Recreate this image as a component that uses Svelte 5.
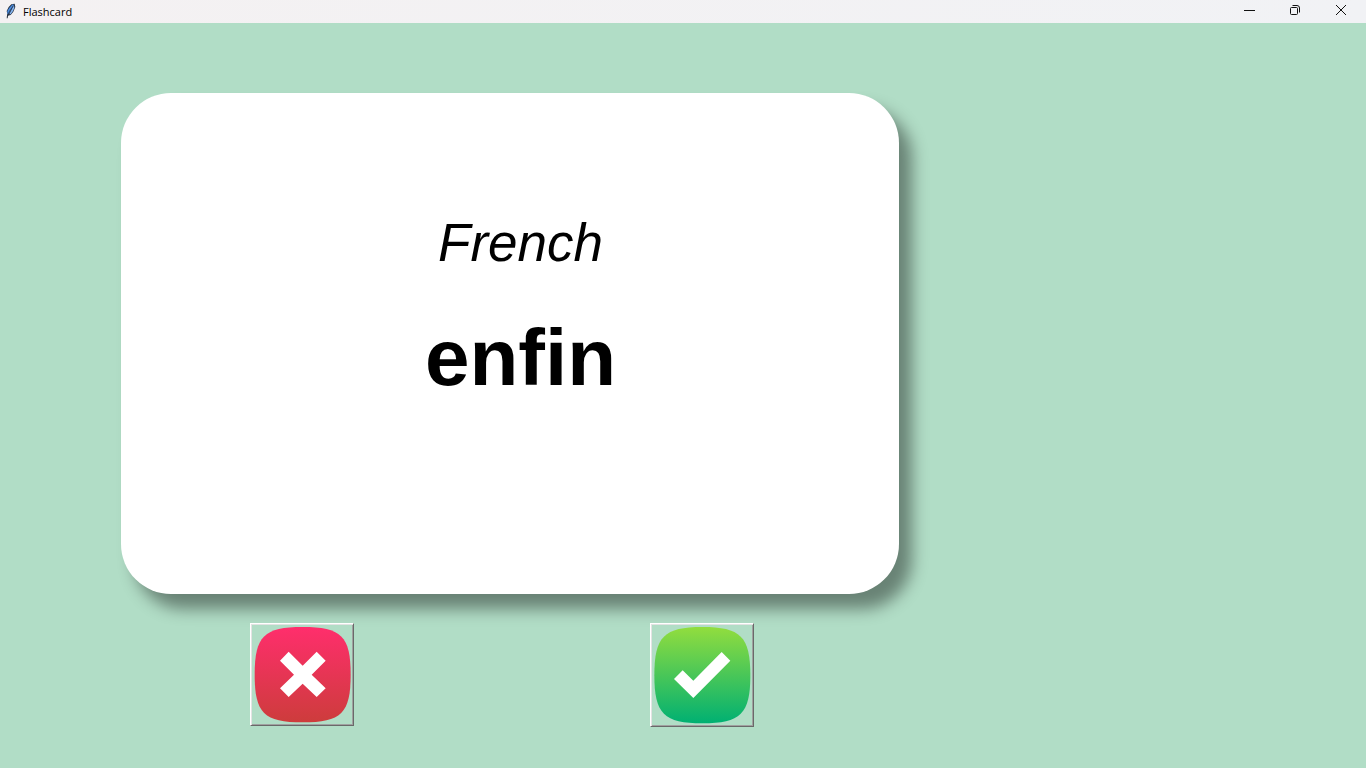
<script>
  const card = { language: 'French', word: 'enfin' };
</script>

<div class="window">
  <header>
    <svg class="feather" viewBox="0 0 24 24" aria-hidden="true">
      <path d="M7 23 8 16 7 12 10 6 14 2 19 1 20 6 17 13 13 18 9 19 8.500 23Z" fill="#26303f" />
      <path d="M8 16 8 12 11 7 16 2 18 3 13 11 10 17Z" fill="#4a8be0" />
      <path d="M11 17 14 11 18 3 18.500 7 16.500 12 13 17Z" fill="#86b6f2" />
      <path d="M8 20 11 13 17 4" fill="none" stroke="#1b232e" />
    </svg>
    <h1>Flashcard</h1>
    <nav aria-label="Window controls">
      <button aria-label="Minimize"><svg viewBox="0 0 12 12"><path d="M1 6.5H12" /></svg></button>
      <button aria-label="Restore"><svg viewBox="0 0 12 12"><rect x="1.5" y="3.5" width="7" height="7" rx="1" /><path d="M3.5 1.5H8Q10.500 1.500 10.500 4V8.500" /></svg></button>
      <button aria-label="Close"><svg viewBox="0 0 12 12"><path d="M1 1 11 11M11 1 1 11" /></svg></button>
    </nav>
  </header>

  <main>
    <section class="card">
      <p class="language">{card.language}</p>
      <p class="word">{card.word}</p>
    </section>
    <div class="answers">
      <button class="answer" aria-label="Unknown">
        <svg viewBox="42 36 291 288" preserveAspectRatio="none" class="wrong">
          <defs><linearGradient id="red" x2="0" y2="1"><stop stop-color="#ff2e6c" /><stop offset="1" stop-color="#cd3c3c" /></linearGradient></defs>
          <path fill="url(#red)" d="M188 36C304 36 332 64 332 179C332 294 304 322 188 322C72 322 44 294 44 179C44 64 72 36 188 36Z" />
          <path fill="#fff" d="M146 110 188 152 230 110 257 137 215 179 257 220 230 246 188 206 146 246 120 220 162 179 120 137Z" />
        </svg>
      </button>
      <button class="answer" aria-label="Known">
        <svg viewBox="42 36 291 291" class="right">
          <defs><linearGradient id="green" x2="0" y2="1"><stop stop-color="#92dd3e" /><stop offset="1" stop-color="#00b072" /></linearGradient></defs>
          <path fill="url(#green)" d="M187 36C302 36 331 65 331 181C331 297 302 325 187 325C72 325 43 297 43 181C43 65 72 36 187 36Z" />
          <path fill="#fff" d="M128 166 160 197 245 111 271 137 160 249 102 192Z" />
        </svg>
      </button>
    </div>
  </main>
</div>

<style>
  :global(body) { margin: 0; background: #b1ddc6; }
  .window { min-height: 100vh; background: #b1ddc6; font-family: "Liberation Sans", Arial, sans-serif; color: #000; }
  header { display: flex; align-items: center; height: 23px; padding-left: 2px; background: linear-gradient(90deg, #f4f1f2, #f1f2f5); }
  .feather { width: 16px; height: 16px; margin-bottom: 2px; }
  h1 { margin: 0 0 0 5px; font: 400 11px/23px "Open Sans", sans-serif; }
  nav { display: flex; align-self: flex-start; margin-left: auto; margin-right: 2px; }
  nav button { display: flex; justify-content: center; align-items: center; width: 46px; height: 20px; padding: 0; border: 0; background: none; }
  nav svg { width: 12px; height: 12px; fill: none; stroke: #111; stroke-width: 1; }
  main { box-sizing: border-box; max-width: 1020px; padding: 70px 121px 40px; }
  .card { box-sizing: border-box; min-height: 501px; padding: 120px 0 40px 21px; border-radius: 50px; background: #fff; box-shadow: 13px 15px 16px rgb(0 0 0 / 41%); text-align: center; }
  p { margin: 0; }
  .language { font-size: 53px; line-height: 60px; font-style: italic; }
  .word { margin-top: 40px; font-size: 80px; line-height: 90px; font-weight: 700; font-variant-ligatures: none; }
  .answers { display: flex; justify-content: space-between; align-items: flex-start; padding: 29px 145px 0 129px; }
  .answer { padding: 3px 2px 2px 3px; border: 1px solid; border-color: #fff #696969 #696969 #fff; background: #b1ddc6; box-shadow: inset 1px 1px #e3e3e3, inset -1px -1px #a0a0a0; }
  .answer svg { display: block; width: 97px; height: 97px; }
  .answer .wrong { height: 96px; }
</style>
